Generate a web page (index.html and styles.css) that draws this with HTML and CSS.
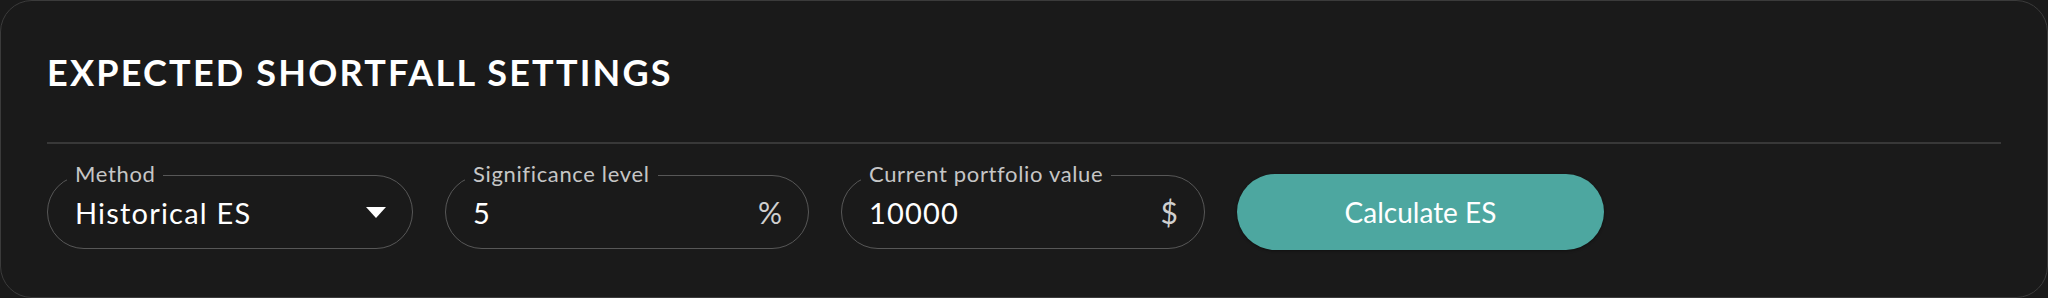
FILE: index.html
```html
<!DOCTYPE html>
<html lang="en">
<head>
    <meta charset="UTF-8">
    <meta name="viewport" content="width=device-width, initial-scale=1.0">
    <title>Expected Shortfall Settings</title>
    <link rel="stylesheet" href="styles.css">
</head>
<body>
    <div class="card">
        <h2 class="card-title">EXPECTED SHORTFALL SETTINGS</h2>
        <div class="divider"></div>

        <div class="settings-row">
            <div class="field field-method">
                <span class="field-label">Method</span>
                <span class="field-value">Historical ES</span>
                <svg class="select-arrow" width="20" height="11" viewBox="0 0 20 11">
                    <path d="M0 0 L20 0 L10 11 Z" fill="#fff"/>
                </svg>
            </div>

            <div class="field">
                <span class="field-label">Significance level</span>
                <span class="field-value">5</span>
                <span class="field-suffix">%</span>
            </div>

            <div class="field">
                <span class="field-label">Current portfolio value</span>
                <span class="field-value">10000</span>
                <span class="field-suffix">$</span>
            </div>

            <button class="calc-button">Calculate ES</button>
        </div>
    </div>
</body>
</html>
```

FILE: styles.css
```css
body {
    margin: 0;
    padding: 0;
    background-color: #1a1a1a;
    font-family: Lato, "Noto Sans", sans-serif;
}

.card {
    box-sizing: border-box;
    width: 2048px;
    height: 298px;
    padding: 0 46px;
    background-color: #1a1a1a;
    border: 1.5px solid #3b3b3b;
    border-radius: 32px;
}

.card-title {
    margin: 0;
    padding-top: 49px;
    font-size: 36px;
    line-height: 44px;
    font-weight: 700;
    color: #fff;
    letter-spacing: 2.2px;
}

.divider {
    height: 2px;
    margin-top: 48px;
    background-color: #383838;
}

.settings-row {
    display: flex;
    align-items: center;
    gap: 32px;
    margin-top: 30px;
}

.field {
    position: relative;
    box-sizing: border-box;
    width: 364px;
    height: 74px;
    padding: 0 26px 0 27px;
    display: flex;
    align-items: center;
    justify-content: space-between;
    border: 1.5px solid #575757;
    border-radius: 37px;
}

.field-method {
    width: 366px;
}

/* label sits on top of the outline, like a notch */
.field-label {
    position: absolute;
    top: -16px;
    left: 19px;
    padding: 0 8px;
    background-color: #1a1a1a;
    font-size: 22px;
    line-height: 28px;
    letter-spacing: 0.65px;
    color: #c6c6c6;
}

.field-value {
    font-size: 29px;
    letter-spacing: 1.2px;
    color: #fff;
}

.field-suffix {
    font-size: 30px;
    color: #cfcfcf;
}

.calc-button {
    width: 367px;
    height: 76px;
    border: none;
    border-radius: 38px;
    background-color: #4da7a0;
    color: #fff;
    font-family: inherit;
    font-size: 28px;
    cursor: pointer;
    box-shadow: 0 1px 3px rgba(0, 0, 0, 0.4);
}

.calc-button:hover {
    background-color: #43968f;
}
```
